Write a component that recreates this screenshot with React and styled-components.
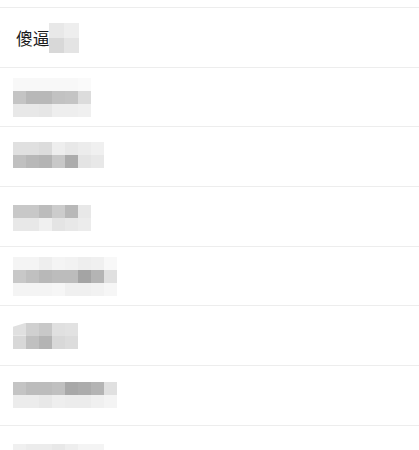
import React from "react";
import styled, { createGlobalStyle } from "styled-components";

const GlobalStyle = createGlobalStyle`
  html, body {
    margin: 0;
    padding: 0;
    background: #fff;
  }
  body {
    font-family: "Noto Sans", "Noto Sans CJK SC", sans-serif;
    overflow: hidden;
  }
`;

const List = styled.div`
  width: 100%;
  display: flex;
  flex-direction: column;
`;

const TopEdge = styled.div`
  height: 8px;
  border-bottom: 1px solid #ededed;
  box-sizing: border-box;
`;

const Row = styled.div`
  height: 59.7px;
  box-sizing: border-box;
  border-bottom: 1px solid #ededed;
  display: flex;
  align-items: center;
  padding-left: ${(p) => (p.$named ? "16px" : "13px")};
  padding-top: ${(p) => (p.$named ? "1px" : "0")};
`;

const Name = styled.span`
  font-family: "Noto Sans CJK SC", sans-serif;
  font-size: 16.8px;
  color: #1a1a1a;
  margin-right: -1px;
`;

const Mosaic = styled.div`
  display: grid;
  grid-template-columns: repeat(${(p) => p.$cols}, ${(p) => p.$size}px);
  grid-auto-rows: ${(p) => p.$size}px;
  margin-top: ${(p) => p.$shift || 0}px;
`;

const Cell = styled.div`
  background: ${(p) => p.$shade};
  clip-path: ${(p) => (p.$slant ? "polygon(0 30%, 100% 0, 100% 100%, 0 100%)" : "none")};
`;

const g = (v) => `rgb(${v},${v},${v})`;

const rows = [
  {
    rows: [
      [0xf8, 0xf8, 0xf8, 0xf8, 0xf8, 0xfa],
      [0xc4, 0xb8, 0xb8, 0xc2, 0xc4, 0xdc],
      [0xe8, 0xe8, 0xe6, 0xee, 0xee, 0xf0],
    ],
  },
  {
    rows: [
      [0xe0, 0xe0, 0xdc, 0xee, 0xe8, 0xec, 0xf0],
      [0xc0, 0xb8, 0xb4, 0xc8, 0xac, 0xe4, 0xe8],
    ],
    shift: -3,
  },
  {
    rows: [
      [0xc8, 0xc8, 0xbc, 0xcc, 0xb8, 0xe8],
      [0xe8, 0xe8, 0xf0, 0xe4, 0xe8, 0xec],
    ],
    shift: 4,
  },
  {
    rows: [
      [0xf4, 0xf4, 0xee, 0xf4, 0xf2, 0xee, 0xf0, 0xf8],
      [0xc8, 0xc0, 0xb8, 0xbc, 0xbc, 0xa4, 0xb4, 0xe0],
      [0xf4, 0xf4, 0xf4, 0xf6, 0xf0, 0xf0, 0xf2, 0xf6],
    ],
  },
  {
    rows: [
      [0xe0, 0xd0, 0xc8, 0xe0, 0xe2],
      [0xd8, 0xc0, 0xb4, 0xd8, 0xdc],
    ],
    slant: true,
  },
  {
    rows: [
      [0xc4, 0xbc, 0xbc, 0xc0, 0xa8, 0xac, 0xb4, 0xe0],
      [0xec, 0xec, 0xe8, 0xee, 0xec, 0xec, 0xf0, 0xf4],
    ],
  },
  {
    rows: [
      [0xf0, 0xec, 0xec, 0xe8, 0xee, 0xf4, 0xf4],
      [0xf4, 0xf2, 0xf2, 0xf0, 0xf4, 0xf8, 0xf8],
    ],
    shift: 3,
  },
];

const Blur = ({ data, size = 13, shift, slant }) => (
  <Mosaic $cols={data[0].length} $size={size} $shift={shift}>
    {data.flat().map((v, i) => (
      <Cell key={i} $shade={g(v)} $slant={slant && i === 0} />
    ))}
  </Mosaic>
);

export default function App() {
  return (
    <>
      <GlobalStyle />
      <List>
        <TopEdge />
        <Row $named>
          <Name>傻逼</Name>
          <Blur
            size={15}
            data={[
              [0xe8, 0xee],
              [0xd8, 0xe4],
            ]}
          />
        </Row>
        {rows.map((r, i) => (
          <Row key={i}>
            <Blur data={r.rows} shift={r.shift} slant={r.slant} />
          </Row>
        ))}
      </List>
    </>
  );
}
